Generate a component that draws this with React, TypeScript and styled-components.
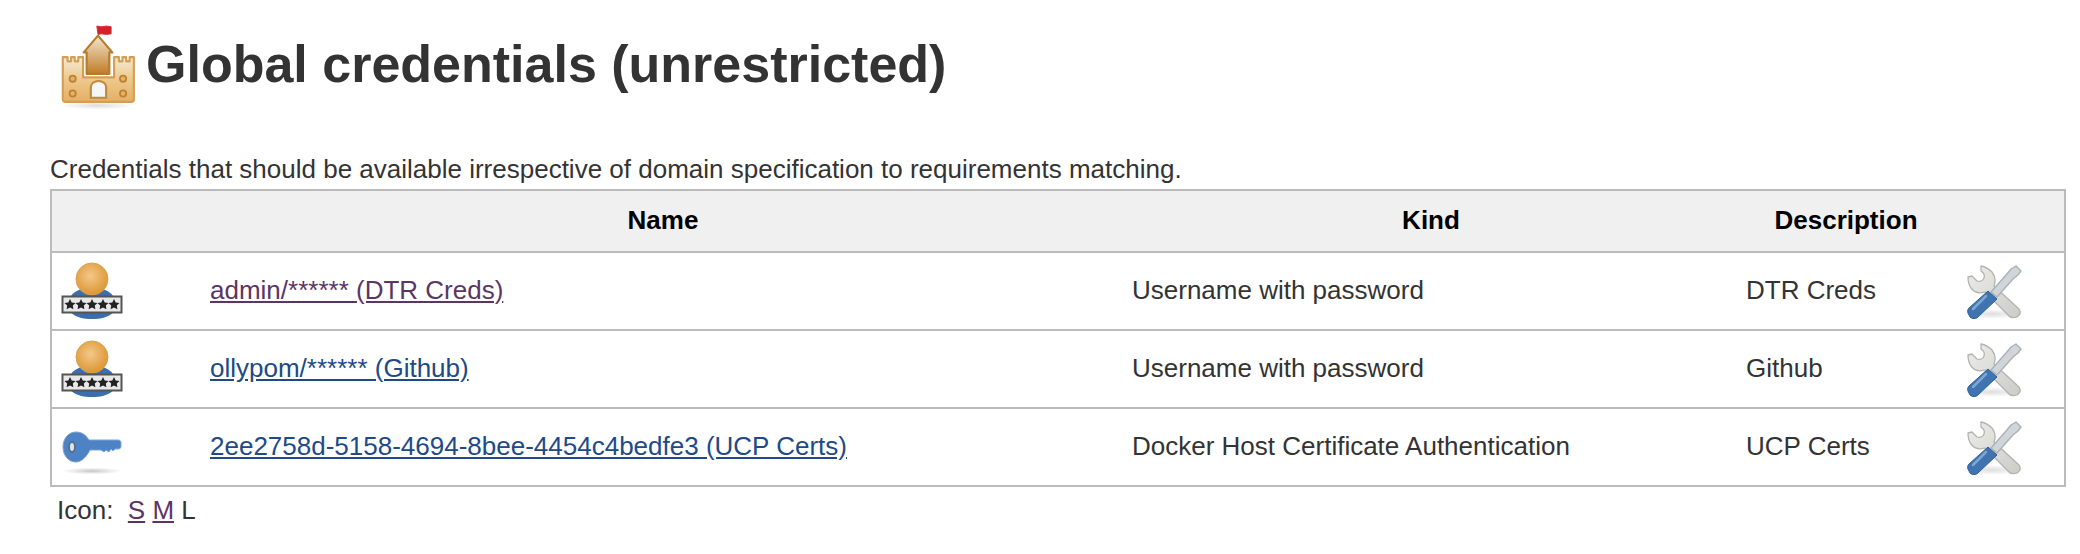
import React from "react";
import styled, { createGlobalStyle } from "styled-components";

const Global = createGlobalStyle`
  html, body { margin: 0; padding: 0; background: #fff; }
  body { font-family: "Liberation Sans", Arial, sans-serif; color: #333; font-size: 26px; }
`;

const Page = styled.div`
  width: 2080px;
  height: 554px;
  overflow: hidden;
  padding: 20px 16px 0 50px;
  box-sizing: border-box;
`;

const Heading = styled.h1`
  display: flex;
  align-items: center;
  gap: 5px;
  margin: 0 0 0 5px;
  height: 91px;
  font-size: 52px;
  font-weight: 700;
  color: #333;
  line-height: 1;
`;

const HeadingText = styled.span`
  margin-bottom: 4px;
`;

const Lead = styled.p`
  margin: 44px 0 0;
  font-size: 26px;
  line-height: 28px;
  height: 34px;
`;

const Table = styled.table`
  width: 2014px;
  border-collapse: collapse;
  table-layout: fixed;
  border: 2px solid #bbb;
`;

const HeadCell = styled.th`
  background: #f0f0f0;
  color: #000;
  font-size: 26px;
  font-weight: 700;
  text-align: center;
  height: 62px;
  padding: 0 0 2px;
  box-sizing: border-box;
  border-bottom: 2px solid #bbb;
`;

const Row = styled.tr`
  height: 78px;
  & + & td { border-top: 2px solid #bbb; }
`;

const Cell = styled.td`
  padding: 0 8px 2px;
  font-size: 26px;
  color: #333;
  vertical-align: middle;
`;

const IconCell = styled(Cell)`
  padding: 0 0 0 8px;
  line-height: 0;
`;

const ToolCell = styled(Cell)`
  padding: 0 0 0 7px;
  line-height: 0;
`;

const Cred = styled.a<{ $visited?: boolean }>`
  color: ${(p) => (p.$visited ? "#5c3566" : "#204a87")};
  text-decoration: underline;
`;

const Sizes = styled.div`
  margin: 9px 0 0 7px;
  font-size: 26px;
  line-height: 28px;
  white-space: pre;
`;

const Size = styled.a`
  color: #5c3566;
  text-decoration: underline;
`;

const Castle = () => (
  <svg width="86" height="91" viewBox="0 0 72 76" style={{ filter: "blur(0.5px)", flex: "none" }}>
    <defs>
      <linearGradient id="cw" x1="0" y1="0" x2="0" y2="1">
        <stop offset="0" stopColor="#f4ead9" />
        <stop offset="0.45" stopColor="#eecb92" />
        <stop offset="1" stopColor="#e6ae62" />
      </linearGradient>
      <linearGradient id="ct" x1="0" y1="0" x2="0" y2="1">
        <stop offset="0" stopColor="#f3e6d0" />
        <stop offset="1" stopColor="#bf7d26" />
      </linearGradient>
      <radialGradient id="cs">
        <stop offset="0" stopColor="#bbb" stopOpacity="0.55" />
        <stop offset="1" stopColor="#ccc" stopOpacity="0" />
      </radialGradient>
    </defs>
    <ellipse cx="36" cy="71.500" rx="33" ry="3.500" fill="url(#cs)" />
    <path d="M35 5l4 .5 4-.5 4 .5v6l-4 .5-4-.5-3 .5z" fill="#d3202a" stroke="#d3343a" strokeWidth="0.800" />
    <path d="M36 13 L48 27 L45.500 27 V45 H26.500 V27 L24 27Z" fill="url(#ct)" stroke="#b67b2c" strokeWidth="1.800" strokeLinejoin="round" />
    <path d="M6.500 31h4v3.500h3v-3.500h3v3.500h3v-3.500h4V48H49.500V31h4v3.500h3v-3.500h3v3.500h3v-3.500h3.500V66.500a2 2 0 0 1-2 2H8.500a2 2 0 0 1-2-2z" fill="url(#cw)" stroke="#d39f52" strokeWidth="1.800" strokeLinejoin="round" />
    <path d="M30 65V56a6.400 5 0 0 1 12.800 0v9z" fill="#f6f6f6" stroke="#c08a3e" strokeWidth="1.800" />
    <circle cx="14.800" cy="49" r="2.600" fill="#e8b266" stroke="#bb8233" strokeWidth="1.500" />
    <circle cx="57" cy="49" r="2.600" fill="#e8b266" stroke="#bb8233" strokeWidth="1.500" />
    <circle cx="14.800" cy="61.500" r="2.600" fill="#e8b266" stroke="#bb8233" strokeWidth="1.500" />
    <circle cx="57" cy="61.500" r="2.600" fill="#e8b266" stroke="#bb8233" strokeWidth="1.500" />
  </svg>
);

const Person = ({ id }: { id: string }) => (
  <svg width="64" height="60" viewBox="0 0 64 60" style={{ filter: "blur(0.45px)" }}>
    <defs>
      <radialGradient id={`h${id}`} cx="0.45" cy="0.4" r="0.6">
        <stop offset="0" stopColor="#f3c88c" />
        <stop offset="1" stopColor="#dd9630" />
      </radialGradient>
    </defs>
    <path d="M8 42c2-10 10-15 24-15s22 5 24 15c1 10-8 16-24 16S7 52 8 42z" fill="#3a6eae" />
    <circle cx="32" cy="18" r="16" fill={`url(#h${id})`} stroke="#d9a050" strokeWidth="1" />
    <rect x="2.500" y="35.500" width="59" height="16" fill="#e8e8e8" stroke="#555" strokeWidth="2" />
    <g fill="#222">
      {[10, 21, 32, 43, 54].map((x) => (
        <path key={x} d={`M${x} 38l1.700 3.400 3.800.500-2.700 2.600.600 3.700-3.400-1.800-3.400 1.800.600-3.700-2.700-2.600 3.800-.500z`} />
      ))}
    </g>
  </svg>
);

const KeyIcon = () => (
  <svg width="64" height="60" viewBox="0 0 64 60" style={{ filter: "blur(0.45px)" }}>
    <defs>
      <radialGradient id="ks">
        <stop offset="0" stopColor="#aaa" stopOpacity="0.7" />
        <stop offset="1" stopColor="#bbb" stopOpacity="0" />
      </radialGradient>
    </defs>
    <ellipse cx="32" cy="54" rx="30" ry="3.500" fill="url(#ks)" />
    <path d="M16 15c6 0 10 3 13 8h29c2 0 3 1 3 3v3c0 2-1 3-3 3h-3l-2 2-2-2-2 3-3-2-2 2-3-2h-11c-3 6-8 12-14 12C8 45 3 38 3 30S8 15 16 15z" fill="#4d82c4" stroke="#7fa3d2" strokeWidth="1" />
    <ellipse cx="12" cy="30" rx="3" ry="5" fill="#dfe5ea" stroke="#55708f" strokeWidth="2" />
  </svg>
);

const Tools = ({ id }: { id: string }) => (
  <svg width="62" height="60" viewBox="0 -3 62 60" style={{ filter: "blur(0.5px)" }}>
    <defs>
      <linearGradient id={`t${id}`} x1="0" y1="0" x2="1" y2="1">
        <stop offset="0" stopColor="#ecece9" />
        <stop offset="1" stopColor="#cbcbc7" />
      </linearGradient>
      <radialGradient id={`s${id}`}>
        <stop offset="0" stopColor="#bbb" stopOpacity="0.5" />
        <stop offset="1" stopColor="#bbb" stopOpacity="0" />
      </radialGradient>
    </defs>
    <ellipse cx="31" cy="50" rx="31" ry="5" fill={`url(#s${id})`} />
    <path d="M20 2c5 1 8 3 11 6 3 4 4 9 2 14L58 45c2 3 1 6-2 8-3 1-6 1-8-1L24 28c-6 2-11 0-14-4-3-4-3-8-3-11l4-1 5 5c3 1 6 0 7-3 1-3 0-5-3-7z" fill={`url(#t${id})`} stroke="#b3b3b0" strokeWidth="1.300" strokeLinejoin="round" />
    <path d="M50 5l5-3 5 5-3 4-5 4-16 18-6-5 15-17z" fill="#cfd5d8" stroke="#a9b1b5" strokeWidth="1.300" strokeLinejoin="round" />
    <path d="M27 27l9 8L17 53c-2 2-6 2-8 0l-2-4c-1-2 0-4 1-5z" fill="#3f74b0" stroke="#2f5f99" strokeWidth="1" strokeLinejoin="round" />
    <path d="M12 45l13-13" stroke="#7ea6d4" strokeWidth="2.500" strokeLinecap="round" />
  </svg>
);

const rows = [
  { icon: <Person id="a" />, name: "admin/****** (DTR Creds)", visited: true, kind: "Username with password", desc: "DTR Creds", id: "a" },
  { icon: <Person id="b" />, name: "ollypom/****** (Github)", visited: false, kind: "Username with password", desc: "Github", id: "b" },
  { icon: <KeyIcon />, name: "2ee2758d-5158-4694-8bee-4454c4bedfe3 (UCP Certs)", visited: false, kind: "Docker Host Certificate Authentication", desc: "UCP Certs", id: "c" },
];

export default function App() {
  return (
    <Page>
      <Global />
      <Heading>
        <Castle />
        <HeadingText>Global credentials (unrestricted)</HeadingText>
      </Heading>
      <Lead>Credentials that should be available irrespective of domain specification to requirements matching.</Lead>
      <Table>
        <colgroup>
          <col style={{ width: 151 }} />
          <col style={{ width: 922 }} />
          <col style={{ width: 614 }} />
          <col style={{ width: 216 }} />
          <col style={{ width: 111 }} />
        </colgroup>
        <thead>
          <tr>
            <HeadCell />
            <HeadCell>Name</HeadCell>
            <HeadCell>Kind</HeadCell>
            <HeadCell>Description</HeadCell>
            <HeadCell />
          </tr>
        </thead>
        <tbody>
          {rows.map((r) => (
            <Row key={r.id}>
              <IconCell>{r.icon}</IconCell>
              <Cell><Cred $visited={r.visited}>{r.name}</Cred></Cell>
              <Cell>{r.kind}</Cell>
              <Cell>{r.desc}</Cell>
              <ToolCell><Tools id={r.id} /></ToolCell>
            </Row>
          ))}
        </tbody>
      </Table>
      <Sizes>
        {"Icon:  "}<Size>S</Size>{" "}<Size>M</Size>{" L"}
      </Sizes>
    </Page>
  );
}
